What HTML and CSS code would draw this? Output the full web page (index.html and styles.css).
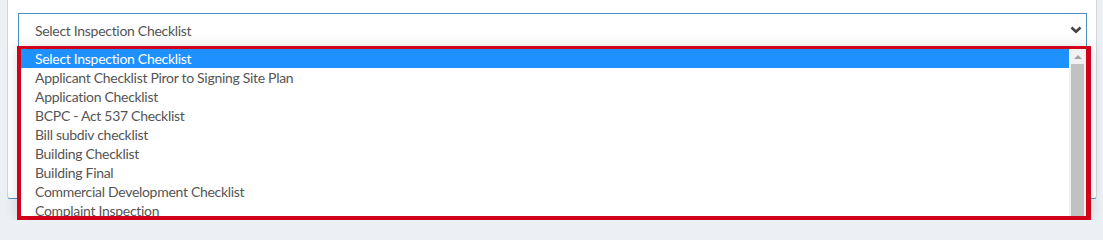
FILE: index.html
```html
<!DOCTYPE html>
<html lang="en">
<head>
<meta charset="utf-8">
<title>Inspection Checklist</title>
<link rel="stylesheet" href="styles.css">
</head>
<body>
<div class="card">
  <div class="field">
    <div class="select">
      <span class="select-text">Select Inspection Checklist</span>
      <svg class="chevron" width="12" height="8" viewBox="0 0 12 8"><polyline points="1.5,1.5 6,5.8 10.5,1.5" fill="none" stroke="#444" stroke-width="2.6"/></svg>
    </div>
    <div class="listbox">
      <ul class="options">
        <li class="option selected">Select Inspection Checklist</li>
        <li class="option">Applicant Checklist Piror to Signing Site Plan</li>
        <li class="option">Application Checklist</li>
        <li class="option">BCPC - Act 537 Checklist</li>
        <li class="option">Bill subdiv checklist</li>
        <li class="option">Building Checklist</li>
        <li class="option">Building Final</li>
        <li class="option">Commercial Development Checklist</li>
        <li class="option">Complaint Inspection</li>
      </ul>
      <div class="scrollbar">
        <div class="arrow"></div>
        <div class="thumb"></div>
      </div>
    </div>
  </div>
</div>
</body>
</html>
```
FILE: styles.css
```css
html, body {
  margin: 0;
  padding: 0;
  height: 220px;
  overflow: hidden;
}
body {
  background: #ecf0f5;
  font-family: "Lato", "Open Sans", sans-serif;
  width: 1103px;
}
.card {
  margin-left: 7px;
  width: 1090px;
  height: 199px;
  box-sizing: border-box;
  background: #fff;
  border: 1px solid #d2d6de;
  border-top: none;
  border-bottom-color: #4a90c2;
  border-radius: 0 0 3px 3px;
  padding: 13px 9px 0 10px;
}
.field {
  position: relative;
}
.select {
  height: 34px;
  box-sizing: border-box;
  border: 1px solid #4a90c2;
  display: flex;
  align-items: center;
  justify-content: space-between;
  padding: 0 4px 0 16px;
  color: #555;
  font-size: 14px;
  letter-spacing: -0.3px;
}
.chevron {
  display: block;
}
.listbox {
  position: absolute;
  top: 33px;
  left: -1px;
  width: 1074px;
  height: 174px;
  box-sizing: border-box;
  border-style: solid;
  border-color: #d0021b;
  border-width: 3px 5px 4px 4px;
  background: #fff;
  display: flex;
  overflow: hidden;
  box-shadow: 0 0 12px rgba(0, 0, 0, 0.14);
}
.options {
  list-style: none;
  margin: 0;
  padding: 0;
  flex: 1;
}
.option {
  height: 19px;
  line-height: 19px;
  padding-left: 14px;
  color: #555;
  font-size: 14px;
  letter-spacing: -0.3px;
  white-space: nowrap;
}
.option.selected {
  background: #1e90ff;
  color: #fff;
}
.scrollbar {
  width: 17px;
  background: #f1f1f1;
  display: flex;
  flex-direction: column;
  align-items: center;
  padding-top: 6px;
  box-sizing: border-box;
}
.arrow {
  width: 0;
  height: 0;
  border-left: 4px solid transparent;
  border-right: 4px solid transparent;
  border-bottom: 4px solid #a3a3a3;
}
.thumb {
  margin-top: 5px;
  width: 13px;
  flex: 1;
  background: #c1c1c1;
}
```
